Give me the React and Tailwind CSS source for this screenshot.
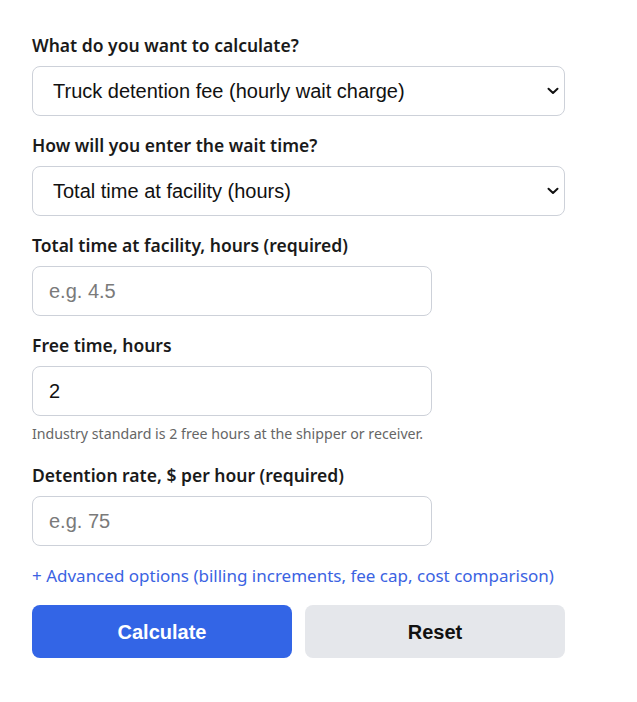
import React from 'react';

const labelCls = "block text-[17.5px] leading-6 font-semibold text-[#1a1a1a] mb-[9px]";
const fieldCls = "h-[50px] rounded-lg border border-[#cdd1d9] bg-white px-4 text-[20px] text-[#111] font-['Liberation_Sans',Arial,sans-serif] outline-none placeholder:text-[#7a7a7a]";

const Select = ({ children, value }) => (
  <div className="relative">
    <select className={`${fieldCls} w-full pl-5 appearance-none`} defaultValue={value}>
      {children}
    </select>
    <svg
      className="absolute right-[6px] top-1/2 -translate-y-1/2 pointer-events-none"
      width="12"
      height="8"
      viewBox="0 0 12 8"
      fill="none"
    >
      <path d="M1.5 1.8 L6 6 L10.5 1.8" stroke="#111" strokeWidth="2" strokeLinecap="round" strokeLinejoin="round" />
    </svg>
  </div>
);

const App = () => {
  return (
    <div className="bg-white min-h-[702px] font-['Noto_Sans',sans-serif]">
      <div className="w-[533px] ml-8 pt-[33px] flex flex-col">
        <div className="mb-[17px]">
          <label className={labelCls}>What do you want to calculate?</label>
          <Select value="fee">
            <option value="fee">Truck detention fee (hourly wait charge)</option>
          </Select>
        </div>

        <div className="mb-[17px]">
          <label className={labelCls}>How will you enter the wait time?</label>
          <Select value="total">
            <option value="total">Total time at facility (hours)</option>
          </Select>
        </div>

        <div className="mb-[17px]">
          <label className={labelCls}>Total time at facility, hours (required)</label>
          <input className={`${fieldCls} w-[400px]`} placeholder="e.g. 4.5" />
        </div>

        <div className="mb-[19px]">
          <label className={labelCls}>Free time, hours</label>
          <input className={`${fieldCls} w-[400px]`} defaultValue="2" />
          <p className="mt-2 text-[14.2px] leading-5 text-[#666]">
            Industry standard is 2 free hours at the shipper or receiver.
          </p>
        </div>

        <div className="mb-[18px]">
          <label className={labelCls}>Detention rate, $ per hour (required)</label>
          <input className={`${fieldCls} w-[400px]`} placeholder="e.g. 75" />
        </div>

        <button className="text-left text-[17px] leading-6 font-[450] text-[#3b63e2] mb-[17px]">
          + Advanced options (billing increments, fee cap, cost comparison)
        </button>

        <div className="grid grid-cols-2 gap-[13px]">
          <button className="h-[53px] rounded-lg bg-[#3365e6] text-white text-[20px] font-bold font-['Liberation_Sans',Arial,sans-serif]">
            Calculate
          </button>
          <button className="h-[53px] rounded-lg bg-[#e5e7eb] text-[#111] text-[20px] font-bold font-['Liberation_Sans',Arial,sans-serif]">
            Reset
          </button>
        </div>
      </div>
    </div>
  );
};

export default App;
